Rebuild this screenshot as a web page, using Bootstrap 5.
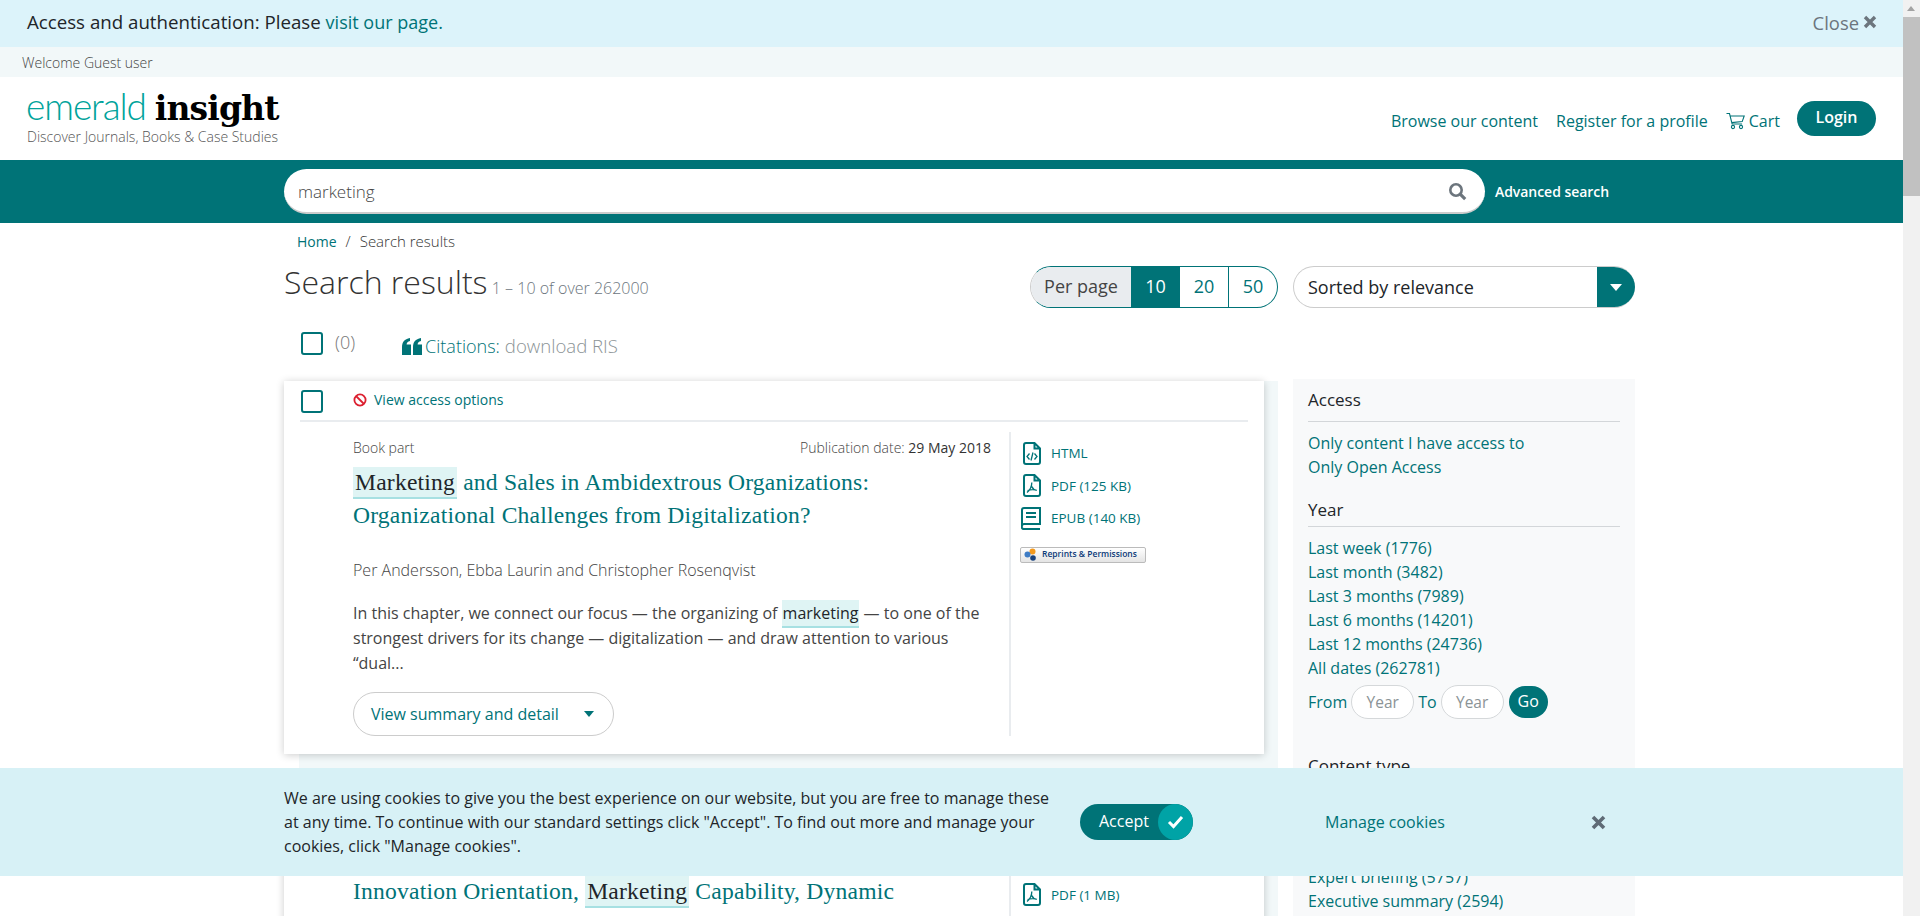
<!DOCTYPE html>
<html lang="en">
<head>
<meta charset="utf-8">
<title>Search results | Emerald Insight</title>
<link href="https://cdn.jsdelivr.net/npm/bootstrap@5.3.0/dist/css/bootstrap.min.css" rel="stylesheet">
<style>
html,body{height:916px;overflow:hidden}
body{font-family:"Open Sans",sans-serif;color:#333;font-size:14px;padding-right:17px;background:#fff}
a{color:#007377;text-decoration:none}
.teal{color:#007377}
.fake-scroll{position:fixed;top:0;right:0;bottom:0;width:17px;background:#f1f1f1}
.fake-scroll i{position:absolute;left:0;right:0;top:17px;height:179px;background:#c1c1c1}
.fake-scroll b{position:absolute;left:4px;top:6px;border:4.5px solid transparent;border-top:0;border-bottom:5px solid #a3a3a3}
.top-alert{height:47px;background:#dcf3fa;padding:0 26px 2px 27px;font-size:18.7px;font-weight:500;color:#212529}
.top-alert a{font-size:18px}
.top-close{color:#6c757d;font-weight:400;font-size:18.4px}
.welcome{height:30px;background:#f2f8f9;padding-left:22px;font-size:14px;font-weight:300;color:#444}
.site-head{height:83px;padding:0 27px 0 27px}
.logo-main{font-size:37px;line-height:36px;height:36px;margin-top:11px;margin-left:-1px;white-space:nowrap}
.logo-a{font-family:Lato,sans-serif;font-weight:300;color:#00a39b;letter-spacing:-1.1px}
.logo-b{font-family:"DejaVu Serif",serif;font-weight:700;font-size:33px;color:#000;margin-left:9px;letter-spacing:-.9px}
.tagline{font-size:14px;font-weight:300;color:#555;line-height:20px;margin-top:3px}
.head-nav{font-size:16px;font-weight:400;padding-top:32px}
.login-btn{background:#007377;color:#fff;border-radius:18px;height:35px;width:79px;font-size:16px;font-weight:600;line-height:33px;text-align:center;margin-top:-8px}
.search-band{height:63px;background:#007377;padding-left:284px}
.search-pill{width:1201px;height:45px;background:#fff;border-radius:23px;border-bottom:2px solid #ccc;padding:2px 14px 0 14px;font-size:17px;font-weight:300;color:#444}
.adv{color:#fff;font-size:14px;font-weight:600;margin-left:10px;letter-spacing:-.05px}
.page-wrap{margin-left:284px;width:1351px}
.crumbs{padding:8px 0 0 13px;font-size:15px;height:36px;line-height:20px;font-weight:300;color:#333}
.crumbs a{font-weight:400;font-size:14px}
.crumbs span{margin:0 9px}
.title-row{height:58px;padding-top:7px}
.page-h{font-size:32px;font-weight:300;line-height:42px;margin:-5px 0 0;color:#333;white-space:nowrap}
.page-h small{font-size:16px;font-weight:300;color:#6c757d;margin-left:-4px}
.per-group{height:42px;width:248px;font-size:18px;font-weight:400;margin-right:15px;border:1px solid #007377;border-radius:21px;overflow:hidden;border-left-color:#ccc}
.per-group span{display:flex;align-items:center;justify-content:center;height:100%;padding-bottom:1px}
.per-label{width:100px;background:#e9ecef;color:#444;border:1px solid #ccc;border-width:1px 0;margin:-1px 0;height:42px!important}
.per-on{width:49px;background:#007377;color:#fff;margin:-1px 0;height:42px!important}
.per-off{flex:1;color:#007377;border-right:1px solid #007377}
.per-off:last-child{border-right:0}
.sort-box{width:342px;height:42px;border:1px solid #ccc;border-right:0;border-radius:21px;overflow:hidden;font-size:18px;color:#212529;padding-left:14px}
.sort-cap{width:38px;height:42px;background:#007377;margin:-1px 0}
.caret-w{border:6px solid transparent;border-top:7px solid #fff;border-bottom:0}
.tick{display:block;width:22px;height:23px;border:2px solid #007377;border-radius:3px;flex:none}
.bulk-row{height:64px;padding:15px 0 0 17px;font-size:18px}
.bulk-n{margin-left:12px;color:#777;font-weight:300;line-height:20px}
.cite{margin-left:47px;margin-top:2px;font-weight:300;white-space:nowrap;line-height:24px}
.cite svg{margin-right:3px!important}
.cite em{font-style:normal;color:#8b9396;font-size:18.6px;margin-left:5px}
.cols{gap:15px;align-items:flex-start}
.results-col{width:994px;position:relative;flex:none}
.results-back{background:#f2f8f9;margin-left:15px;margin-top:14px;padding-bottom:1px}
.result-box{background:#fff;margin:-14px 14px 36px -15px;box-shadow:0 1px 8px rgba(0,0,0,.2);padding:9px 16px 0}
.rb-top{height:32px;border-bottom:2px solid #e9ecef;padding:0 0 9px 1px}
.access{margin-left:30px;font-size:14px;font-weight:400;line-height:20px;white-space:nowrap}
.access svg{margin-right:7px;vertical-align:-2px}
.rb-body{padding:10px 0 18px 53px;gap:0}
.rb-main{flex:none;padding-right:18px;border-right:2px solid #e9ecef;height:304px;box-sizing:content-box;width:638px}
.rb-meta{font-size:14px;font-weight:300;color:#444;line-height:20px;margin-top:6px}
.rb-meta b{font-weight:400;color:#333}
.rb-title{font-family:"Liberation Serif",serif;font-size:23.6px;line-height:33px;margin:8px 0 0;font-weight:400;color:#007377;letter-spacing:.2px}
.hit{background:#dff4f4;border-bottom:2px solid #a7e0e2;color:#212529;padding:2px 2px}
.rb-auth{font-size:16px;font-weight:300;color:#444;margin-top:27px;line-height:22px}
.rb-abs{font-size:16px;color:#444;font-weight:400;line-height:25px;margin-top:20px}
.rb-abs .hit{padding:2px 1px}
.more-btn{display:flex;width:261px;height:44px;border:1px solid #ccc;border-radius:22px;padding:0 17px;margin-top:16px;font-size:16px;font-weight:400;align-items:center;justify-content:space-between}
.caret-t{border:5px solid transparent;border-top:6px solid #007377;border-bottom:0;margin-right:2px}
.rb-links{padding:5px 0 0 12px;font-size:13.5px}
.fmt{display:flex;align-items:center;gap:10px;height:32.5px;white-space:nowrap}
.fmt svg{flex:none}
.fmt-book{margin-left:-2px}
.reprints{display:flex;align-items:center;width:126px;height:16px;margin:12px 0 0 -3px;border:1px solid #bbb;border-radius:2px;background:linear-gradient(#fff,#e4e4e4);font-size:8.5px;font-weight:600;color:#0b3a78;white-space:nowrap;padding-left:3px;gap:5px;line-height:1}
.side-col{width:342px;flex:none;background:#f8f9fa;margin-top:-2px;padding:9px 15px 40px;font-size:16px;line-height:24px;color:#007377}
.side-h{font-size:17px;font-weight:500;color:#212529;border-bottom:1px solid #d3d6d9;height:30px;line-height:24px;margin-bottom:9px}
.side-h-first{height:34px}
.side-h-year{padding-top:1px}
.side-list{margin-bottom:18px}
.side-list a{display:block;height:24px;white-space:nowrap}
.year-row{gap:4px;height:33px;margin-bottom:36px;margin-top:5px}
.year-in{width:63px;height:34px;border:1px solid #d5d8da;border-radius:17px;background:#fff;color:#8b9396;text-align:center;line-height:32px;font-size:15.5px}
.go-btn{width:39px;height:32px;border-radius:16px;background:#007377;color:#fff;font-size:16px;font-weight:500;text-align:center;line-height:30px;margin-left:1px}
.cookie-bar{position:fixed;left:0;right:17px;top:768px;height:108px;background:#d7f1f6;padding-left:284px;font-size:16px;color:#212529}
.cookie-txt{width:772px;line-height:24px;flex:none}
.accept{width:113px;height:36px;margin-left:24px;border-radius:18px;background:#007377;color:#fff;position:relative;font-size:16px;padding-left:19px;line-height:34px;overflow:hidden;flex:none}
.accept i{position:absolute;right:0;top:0;width:35px;height:36px;background:#00a3a6;border-radius:50%/50%;display:flex;align-items:center;justify-content:center}
.cookie-mg{margin-left:132px;white-space:nowrap}
.cookie-x{margin-left:146px;line-height:0}
.nav-gap{margin-right:18px}
.nav-cart{margin-right:17px}
</style>
</head>
<body>
<div class="top-alert d-flex align-items-center justify-content-between">
  <div>Access and authentication: Please <a href="#" class="fw-normal">visit our page.</a></div>
  <div class="top-close d-flex align-items-center gap-1">Close
    <svg width="14" height="14" viewBox="0 0 14 14"><path d="M2 2l10 10M12 2L2 12" stroke="#6c757d" stroke-width="3.400"/></svg>
  </div>
</div>
<div class="welcome d-flex align-items-center">Welcome Guest user</div>
<div class="site-head d-flex justify-content-between">
  <div>
    <div class="logo-main"><span class="logo-a">emerald</span><span class="logo-b">insight</span></div>
    <div class="tagline">Discover Journals, Books &amp; Case Studies</div>
  </div>
  <div class="head-nav d-flex align-items-start">
    <a href="#" class="nav-gap">Browse our content</a>
    <a href="#" class="nav-gap">Register for a profile</a>
    <a href="#" class="d-flex align-items-center gap-1 nav-cart">
      <svg width="19" height="18" viewBox="0 0 19 18" fill="none" stroke="#007377" stroke-width="1.100"><path d="M.5 1.500h3l2.600 10.500h10M4.200 4h14l-2 5.600-10.600 1"/><circle cx="7" cy="15" r="1.600"/><circle cx="15" cy="15" r="1.600"/></svg>
      Cart</a>
    <a href="#" class="login-btn">Login</a>
  </div>
</div>
<div class="search-band d-flex align-items-center">
  <div class="search-pill d-flex align-items-center justify-content-between">
    <span>marketing</span>
    <svg width="19" height="19" viewBox="0 0 19 19" fill="none" stroke="#6c757d" class="me-1"><circle cx="8" cy="8" r="5.700" stroke-width="2.600"/><path d="M12.200 12.200l5 5" stroke-width="3.200"/></svg>
  </div>
  <a href="#" class="adv">Advanced search</a>
</div>
<div class="page-wrap">
  <div class="crumbs"><a href="#">Home</a><span>/</span>Search results</div>
  <div class="title-row d-flex justify-content-between align-items-start">
    <h1 class="page-h">Search results <small>1 – 10 of over 262000</small></h1>
    <div class="d-flex">
      <div class="per-group d-flex">
        <span class="per-label">Per page</span><span class="per-on">10</span><span class="per-off">20</span><span class="per-off">50</span>
      </div>
      <div class="sort-box d-flex align-items-center justify-content-between">
        <span>Sorted by relevance</span>
        <span class="sort-cap d-flex align-items-center justify-content-center"><span class="caret-w"></span></span>
      </div>
    </div>
  </div>
  <div class="bulk-row d-flex align-items-start">
    <span class="tick"></span>
    <span class="bulk-n">(0)</span>
    <span class="cite teal d-flex align-items-center">
      <svg width="20" height="17" viewBox="0 0 20 17" fill="#007377" class="me-1"><path d="M0 9.500C0 4 2.500 1 8 0v3C5.800 3.600 4.700 4.800 4.600 6.600H9V17H0zM11 9.500C11 4 13.500 1 19 0v3c-2.200.6-3.300 1.800-3.400 3.600H20V17h-9z"/></svg>
      Citations: <em>download RIS</em>
    </span>
  </div>
  <div class="d-flex cols">
    <div class="results-col">
      <div class="results-back">
        <div class="result-box">
          <div class="rb-top d-flex">
            <span class="tick"></span>
            <a href="#" class="access">
              <svg width="14" height="14" viewBox="0 0 14 14" fill="none" stroke="#dc2030" stroke-width="1.800"><circle cx="7" cy="7" r="5.600"/><path d="M3 3l8 8"/></svg>View access options</a>
          </div>
          <div class="rb-body d-flex">
            <div class="rb-main">
              <div class="rb-meta d-flex justify-content-between"><span>Book part</span><span>Publication date: <b>29 May 2018</b></span></div>
              <h2 class="rb-title"><a href="#"><span class="hit">Marketing</span> and Sales in Ambidextrous Organizations: Organizational Challenges from Digitalization?</a></h2>
              <div class="rb-auth">Per Andersson, Ebba Laurin and Christopher Rosenqvist</div>
              <div class="rb-abs">In this chapter, we connect our focus — the organizing of <span class="hit">marketing</span> — to one of the strongest drivers for its change — digitalization — and draw attention to various “dual...</div>
              <a href="#" class="more-btn">View summary and detail <span class="caret-t"></span></a>
            </div>
            <div class="rb-links">
              <a href="#" class="fmt"><svg width="18" height="23" viewBox="0 0 18 23" fill="none" stroke="#007377" stroke-width="2"><path d="M11.500 1H3a2 2 0 0 0-2 2v17a2 2 0 0 0 2 2h12a2 2 0 0 0 2-2V6.500zM11.500 1v5.500H17"/><path d="M6.500 11.500L4 14.500l2.500 3M11.500 11.500l2.500 3-2.500 3M10 10.500l-2 8" stroke-width="1.300"/></svg>HTML</a>
              <a href="#" class="fmt"><svg width="18" height="23" viewBox="0 0 18 23" fill="none" stroke="#007377" stroke-width="2"><path d="M11.500 1H3a2 2 0 0 0-2 2v17a2 2 0 0 0 2 2h12a2 2 0 0 0 2-2V6.500zM11.500 1v5.500H17"/><path d="M8.800 8.500c0 3.500-1.800 7.500-4.800 10M8.800 12.500c1 2.500 2.500 3.500 5 3.800M4.500 16.500c2.500-.8 5-1 8-.6" stroke-width="1.300"/></svg>PDF (125 KB)</a>
              <a href="#" class="fmt fmt-book"><svg width="20" height="23" viewBox="0 0 20 23" fill="none" stroke="#007377" stroke-width="2"><path d="M1 19V3a2 2 0 0 1 2-2h16v16H3a2 2 0 0 0-2 2 2 2 0 0 0 2 3h16"/><path d="M5 6h10M5 10h10"/></svg>EPUB (140 KB)</a>
              <div class="reprints"><svg width="13" height="13" viewBox="0 0 13 13"><circle cx="8.500" cy="3.500" r="3" fill="#f39a1f"/><circle cx="3.500" cy="6.500" r="3" fill="#3f7cc4"/><circle cx="9" cy="10" r="2.800" fill="#17427f"/></svg>Reprints &amp; Permissions</div>
            </div>
          </div>
        </div>
        <div class="result-box mt-0 mb-0">
          <div class="rb-top d-flex">
            <span class="tick"></span>
            <a href="#" class="access"><svg width="14" height="14" viewBox="0 0 14 14" fill="none" stroke="#dc2030" stroke-width="1.800"><circle cx="7" cy="7" r="5.600"/><path d="M3 3l8 8"/></svg>View access options</a>
          </div>
          <div class="rb-body d-flex">
            <div class="rb-main">
              <div class="rb-meta d-flex justify-content-between"><span>Article</span><span>Publication date: <b>2018</b></span></div>
              <h2 class="rb-title"><a href="#">Innovation Orientation, <span class="hit">Marketing</span> Capability, Dynamic Capabilities and</a></h2>
            </div>
            <div class="rb-links">
              <a href="#" class="fmt"><svg width="18" height="23" viewBox="0 0 18 23" fill="none" stroke="#007377" stroke-width="2"><path d="M11.500 1H3a2 2 0 0 0-2 2v17a2 2 0 0 0 2 2h12a2 2 0 0 0 2-2V6.500zM11.500 1v5.500H17"/><path d="M6.500 11.500L4 14.500l2.500 3M11.500 11.500l2.500 3-2.500 3M10 10.500l-2 8" stroke-width="1.300"/></svg>HTML</a>
              <a href="#" class="fmt"><svg width="18" height="23" viewBox="0 0 18 23" fill="none" stroke="#007377" stroke-width="2"><path d="M11.500 1H3a2 2 0 0 0-2 2v17a2 2 0 0 0 2 2h12a2 2 0 0 0 2-2V6.500zM11.500 1v5.500H17"/><path d="M8.800 8.500c0 3.500-1.800 7.500-4.800 10M8.800 12.500c1 2.500 2.500 3.500 5 3.800M4.500 16.500c2.500-.8 5-1 8-.6" stroke-width="1.300"/></svg>PDF (1 MB)</a>
              <a href="#" class="fmt fmt-book"><svg width="20" height="23" viewBox="0 0 20 23" fill="none" stroke="#007377" stroke-width="2"><path d="M1 19V3a2 2 0 0 1 2-2h16v16H3a2 2 0 0 0-2 2 2 2 0 0 0 2 3h16"/><path d="M5 6h10M5 10h10"/></svg>EPUB</a>
            </div>
          </div>
        </div>
      </div>
    </div>
    <aside class="side-col">
      <div class="side-h side-h-first">Access</div>
      <div class="side-list">
        <a href="#">Only content I have access to</a>
        <a href="#">Only Open Access</a>
      </div>
      <div class="side-h side-h-year">Year</div>
      <div>
        <div class="side-list mb-0">
          <a href="#">Last week (1776)</a>
          <a href="#">Last month (3482)</a>
          <a href="#">Last 3 months (7989)</a>
          <a href="#">Last 6 months (14201)</a>
          <a href="#">Last 12 months (24736)</a>
          <a href="#">All dates (262781)</a>
        </div>
        <div class="year-row d-flex align-items-center">
          <span>From</span><span class="year-in">Year</span><span>To</span><span class="year-in">Year</span><span class="go-btn">Go</span>
        </div>
      </div>
      <div class="side-h">Content type</div>
      <div class="side-list">
        <a href="#">Article (198420)</a>
        <a href="#">Book part (41250)</a>
        <a href="#">Case study (6320)</a>
        <a href="#">Expert briefing (5757)</a>
        <a href="#">Executive summary (2594)</a>
      </div>
    </aside>
  </div>
</div>
<div class="cookie-bar d-flex align-items-center">
  <div class="cookie-txt">We are using cookies to give you the best experience on our website, but you are free to manage these at any time. To continue with our standard settings click "Accept". To find out more and manage your cookies, click "Manage cookies".</div>
  <a href="#" class="accept">Accept<i><svg width="17" height="14" viewBox="0 0 17 14" fill="none" stroke="#fff" stroke-width="3"><path d="M2 7l4.500 4.500L15 2"/></svg></i></a>
  <a href="#" class="cookie-mg">Manage cookies</a>
  <span class="cookie-x"><svg width="15" height="15" viewBox="0 0 15 15"><path d="M2 2l11 11M13 2L2 13" stroke="#5f6b76" stroke-width="3.600"/></svg></span>
</div>
<div class="fake-scroll"><b></b><i></i></div>
<script src="https://cdn.jsdelivr.net/npm/bootstrap@5.3.0/dist/js/bootstrap.bundle.min.js"></script>
</body>
</html>
